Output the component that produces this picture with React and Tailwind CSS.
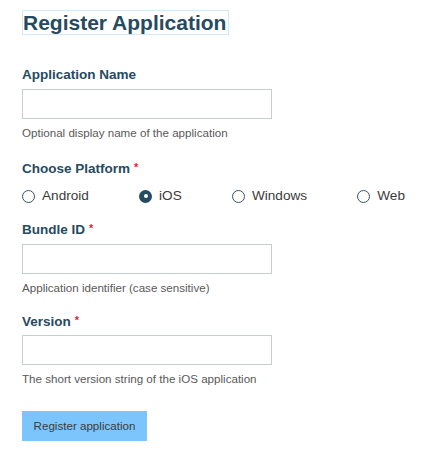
import React from "react";

const font = { fontFamily: '"Liberation Sans", Arial, sans-serif' };

function Label({ children, required, className = "" }) {
  return (
    <div className={`flex items-start pt-[1px] text-[13.5px] leading-[16px] font-bold text-[#264a60] ${className}`}>
      <span>{children}</span>
      {required && (
        <span className="ml-[4px] text-[11px] leading-[12px] text-[#e71d32]">*</span>
      )}
    </div>
  );
}

function Input({ className = "" }) {
  return (
    <div className={`w-[250px] h-[30px] border border-[#c5cfcf] bg-white ${className}`} />
  );
}

function Help({ children, className = "" }) {
  return (
    <div className={`text-[11.6px] leading-[14px] text-[#595959] ${className}`}>{children}</div>
  );
}

function Radio({ label, checked }) {
  return (
    <div className="flex items-center gap-[7px]">
      {checked ? (
        <span className="w-[13px] h-[13px] rounded-full bg-[#264a60] flex items-center justify-center">
          <span className="w-[4px] h-[4px] rounded-full bg-white" />
        </span>
      ) : (
        <span className="w-[13px] h-[13px] rounded-full border border-[#3d5162] bg-white" />
      )}
      <span className="text-[13.6px] leading-[16px] text-[#3b3b3b]">{label}</span>
    </div>
  );
}

export default function App() {
  return (
    <div className="w-[425px] h-[459px] bg-white pl-[22px] pt-[11px]" style={font}>
      <h1 className="ml-[1px] block w-[205px] text-[21px] leading-[23px] font-bold text-[#264a60] outline outline-1 outline-[#d3e8f8]">
        Register Application
      </h1>
      <Label className="mt-[32px]">Application Name</Label>
      <Input className="mt-[6px]" />
      <Help className="mt-[7px]">Optional display name of the application</Help>

      <Label required className="mt-[20px]">Choose Platform</Label>
      <div className="mt-[11px] w-[383px] flex justify-between">
        <Radio label="Android" />
        <Radio label="iOS" checked />
        <Radio label="Windows" />
        <Radio label="Web" />
      </div>

      <Label required className="mt-[17px]">Bundle ID</Label>
      <Input className="mt-[6px]" />
      <Help className="mt-[7px]">Application identifier (case sensitive)</Help>

      <Label required className="mt-[18px]">Version</Label>
      <Input className="mt-[5px]" />
      <Help className="mt-[7px]">The short version string of the iOS application</Help>

      <button className="mt-[25px] w-[125px] h-[30px] bg-[#7cc5fc] text-[11.6px] text-[#3b3b3b] flex items-center justify-center">
        Register application
      </button>
    </div>
  );
}
